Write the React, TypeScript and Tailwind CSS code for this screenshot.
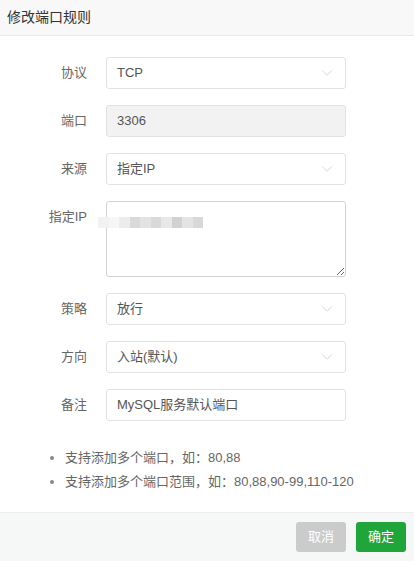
import { ChevronDown } from "lucide-react";

const font = {
  fontFamily: '"Liberation Sans", "Noto Sans CJK SC", sans-serif',
};

const Field = ({ label, children, top }: { label: string; children: React.ReactNode; top?: boolean }) => (
  <div className={`flex ${top ? "items-start" : "items-center"}`}>
    <label className="w-[87px] shrink-0 text-right text-[13px] leading-8 text-[#666]">{label}</label>
    <div className="ml-[19px] w-[240px]">{children}</div>
  </div>
);

const Select = ({ value }: { value: string }) => (
  <div className="flex h-8 items-center justify-between rounded-[3px] border border-[#e2e2e2] bg-white pl-[10px] pr-[9px] text-[13px] text-[#555]">
    <span>{value}</span>
    <ChevronDown className="h-[18px] w-[18px] text-[#c8c8c8]" strokeWidth={1} />
  </div>
);

const mosaic = ["#f2f2f2", "#f6f6f6", "#ececec", "#d9d9d9", "#e3e3e3", "#d9d9d9", "#e8e8e8", "#d2d2d2", "#e4e4e4", "#d8d8d8"];

const App = () => {
  return (
    <div className="flex h-[561px] w-[414px] flex-col bg-white" style={font}>
      <div className="flex h-9 shrink-0 items-center border-b border-[#e8e8e8] bg-[#f8f8f8] pl-[7px] text-[14px] text-[#333]">
        修改端口规则
      </div>

      <div className="flex flex-1 flex-col pt-[21px]">
        <div className="flex flex-col gap-4">
          <Field label="协议">
            <Select value="TCP" />
          </Field>
          <Field label="端口">
            <div className="flex h-8 items-center rounded-[3px] border border-[#e2e2e2] bg-[#f2f2f2] pl-[10px] text-[13px] text-[#555]">
              3306
            </div>
          </Field>
          <Field label="来源">
            <Select value="指定IP" />
          </Field>
          <Field label="指定IP" top>
            <div className="relative">
              <textarea
                className="block h-[76px] w-full resize rounded-[3px] border border-[#d2d2d2] bg-white outline-none"
                defaultValue=""
              />
              <div className="absolute left-[-8px] top-[16px] flex h-[11px]">
                {mosaic.map((c, i) => (
                  <div key={i} className="h-full w-[10.5px]" style={{ backgroundColor: c }} />
                ))}
              </div>
            </div>
          </Field>
          <Field label="策略">
            <Select value="放行" />
          </Field>
          <Field label="方向">
            <Select value="入站(默认)" />
          </Field>
          <Field label="备注">
            <div className="flex h-8 items-center rounded-[3px] border border-[#e2e2e2] bg-white pl-[10px] text-[13px] text-[#555]">
              MySQL服务默认端口
            </div>
          </Field>
        </div>

        <ul className="mt-[25px] flex flex-col pl-[50px] text-[13px] leading-6 text-[#666]">
          <li className="flex items-center">
            <span className="mr-[11px] h-[4px] w-[4px] rounded-full bg-[#888]" />
            支持添加多个端口，如：80,88
          </li>
          <li className="flex items-center">
            <span className="mr-[11px] h-[4px] w-[4px] rounded-full bg-[#888]" />
            支持添加多个端口范围，如：80,88,90-99,110-120
          </li>
        </ul>
      </div>

      <div className="flex h-[49px] shrink-0 items-center justify-end gap-[10px] border-t border-[#ededed] bg-[#f6f8f8] pr-2">
        <button className="h-[30px] w-[50px] rounded-[3px] bg-[#cbcbcb] text-[13px] text-white">取消</button>
        <button className="h-[30px] w-[50px] rounded-[3px] bg-[#20a53a] text-[13px] text-white">确定</button>
      </div>
    </div>
  );
};

export default App;
